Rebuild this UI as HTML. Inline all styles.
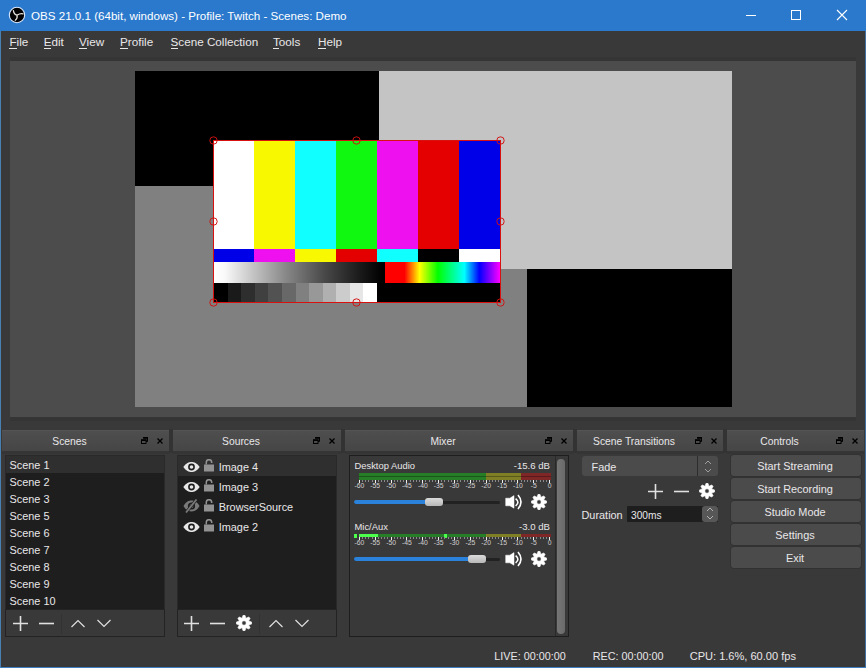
<!DOCTYPE html>
<html><head><meta charset="utf-8">
<style>
*{margin:0;padding:0;box-sizing:border-box}
html,body{width:866px;height:668px;overflow:hidden;background:#3a393a;font-family:"Liberation Sans",sans-serif;color:#e8e7e8}
.a{position:absolute}
.t{position:absolute;white-space:nowrap;line-height:1}
#titlebar{left:0;top:0;width:866px;height:31px;background:#2b79cc}
#bl{left:0;top:31px;width:1px;height:637px;background:#4a7fb4}
#br{left:865px;top:31px;width:1px;height:637px;background:#41719f}
#bb{left:0;top:667px;width:866px;height:1px;background:#3f7fc0}
.menu{font-size:11.7px;color:#e8e7e8;top:36px}
.menu u{text-decoration:none;border-bottom:1px solid #e8e7e8}
.dt{position:absolute;top:430px;height:21px;background:#464546}
.dt .t{font-size:10.3px;top:5px}
.fl{position:absolute;top:7px}
.cl{position:absolute;top:7px}
.lb{position:absolute;background:#1f1e1f}
.row{position:absolute;left:0;right:0}
.tb{position:absolute;background:#3a393a;border:1px solid #2a292a}
.btn{position:absolute;left:731px;width:130px;height:21px;background:#585758;border-radius:3px}
.btn .t{font-size:10.9px;left:0;right:0;text-align:center;top:5px}
.st{font-size:10.8px;top:651px}
</style></head><body>
<div id="titlebar" class="a"></div>
<svg class="a" style="left:8px;top:6px" width="18" height="18" viewBox="0 0 18 18">
<circle cx="9" cy="9" r="7.7" fill="#000" stroke="#d8e8ff" stroke-width="1.1"/>
<path d="M9 9.2Q6 8.6 5.4 4.6M9 9.2Q12 7.2 15 7.8M9 9.2Q9.8 12.4 7.3 14.2" fill="none" stroke="#e6e2dc" stroke-width="1.3" stroke-linecap="round"/>
</svg>
<div class="t" style="left:31px;top:10px;font-size:11.6px;color:#fff">OBS 21.0.1 (64bit, windows) - Profile: Twitch - Scenes: Demo</div>
<div class="a" style="left:746px;top:15px;width:10px;height:1px;background:#fff"></div>
<div class="a" style="left:791px;top:10px;width:10px;height:10px;border:1px solid #fff"></div>
<svg class="a" style="left:836px;top:9px" width="12" height="12" viewBox="0 0 12 12"><path d="M1 1L11 11M11 1L1 11" stroke="#fff" stroke-width="1.1"/></svg>

<div class="t menu" style="left:9.4px"><u>F</u>ile</div>
<div class="t menu" style="left:43.7px"><u>E</u>dit</div>
<div class="t menu" style="left:79px"><u>V</u>iew</div>
<div class="t menu" style="left:120px"><u>P</u>rofile</div>
<div class="t menu" style="left:170.5px"><u>S</u>cene Collection</div>
<div class="t menu" style="left:273px"><u>T</u>ools</div>
<div class="t menu" style="left:318px"><u>H</u>elp</div>

<!-- preview -->
<div class="a" style="left:10px;top:57px;width:846px;height:364px;background:#363536"></div>
<div class="a" style="left:10px;top:61px;width:846px;height:356px;background:#4c4c4c"></div>
<div class="a" style="left:135px;top:71px;width:597px;height:336px;background:#808080"></div>
<div class="a" style="left:135px;top:71px;width:244px;height:115px;background:#000"></div>
<div class="a" style="left:379px;top:71px;width:353px;height:198px;background:#c4c4c4"></div>
<div class="a" style="left:527px;top:269px;width:205px;height:138px;background:#000"></div>
<div class="a" style="left:214px;top:141px;width:40px;height:108px;background:#ffffff"></div>
<div class="a" style="left:214px;top:249px;width:40px;height:13px;background:#0000e8"></div>
<div class="a" style="left:254px;top:141px;width:41px;height:108px;background:#f8f800"></div>
<div class="a" style="left:254px;top:249px;width:41px;height:13px;background:#ee10ee"></div>
<div class="a" style="left:295px;top:141px;width:41px;height:108px;background:#10ffff"></div>
<div class="a" style="left:295px;top:249px;width:41px;height:13px;background:#f8f800"></div>
<div class="a" style="left:336px;top:141px;width:41px;height:108px;background:#10f810"></div>
<div class="a" style="left:336px;top:249px;width:41px;height:13px;background:#e40000"></div>
<div class="a" style="left:377px;top:141px;width:41px;height:108px;background:#ee10ee"></div>
<div class="a" style="left:377px;top:249px;width:41px;height:13px;background:#10ffff"></div>
<div class="a" style="left:418px;top:141px;width:41px;height:108px;background:#e40000"></div>
<div class="a" style="left:418px;top:249px;width:41px;height:13px;background:#000000"></div>
<div class="a" style="left:459px;top:141px;width:41px;height:108px;background:#0000e8"></div>
<div class="a" style="left:459px;top:249px;width:41px;height:13px;background:#ffffff"></div>
<div class="a" style="left:214px;top:262px;width:286px;height:21px;background:#000"></div>
<div class="a" style="left:214px;top:262px;width:168px;height:21px;background:linear-gradient(90deg,#fff 0%,#fafafa 6%,#8a8a8a 42%,#484848 66%,#1c1c1c 86%,#000 100%)"></div>
<div class="a" style="left:385px;top:262px;width:115px;height:21px;background:linear-gradient(90deg,#f00 0%,#f00 17%,#ff0 30%,#0f0 46%,#0ff 69%,#00f 82%,#f0f 100%)"></div>
<div class="a" style="left:214px;top:283px;width:286px;height:19px;background:#000"></div>
<div class="a" style="left:214.00px;top:283px;width:13.88px;height:19px;background:rgb(0,0,0)"></div>
<div class="a" style="left:227.58px;top:283px;width:13.88px;height:19px;background:rgb(26,26,26)"></div>
<div class="a" style="left:241.17px;top:283px;width:13.88px;height:19px;background:rgb(46,46,46)"></div>
<div class="a" style="left:254.75px;top:283px;width:13.88px;height:19px;background:rgb(64,64,64)"></div>
<div class="a" style="left:268.33px;top:283px;width:13.88px;height:19px;background:rgb(82,82,82)"></div>
<div class="a" style="left:281.92px;top:283px;width:13.88px;height:19px;background:rgb(104,104,104)"></div>
<div class="a" style="left:295.50px;top:283px;width:13.88px;height:19px;background:rgb(128,128,128)"></div>
<div class="a" style="left:309.08px;top:283px;width:13.88px;height:19px;background:rgb(152,152,152)"></div>
<div class="a" style="left:322.67px;top:283px;width:13.88px;height:19px;background:rgb(176,176,176)"></div>
<div class="a" style="left:336.25px;top:283px;width:13.88px;height:19px;background:rgb(204,204,204)"></div>
<div class="a" style="left:349.83px;top:283px;width:13.88px;height:19px;background:rgb(230,230,230)"></div>
<div class="a" style="left:363.42px;top:283px;width:13.88px;height:19px;background:rgb(255,255,255)"></div>
<div class="a" style="left:213px;top:140px;width:288px;height:163px;border:1px solid #d81010"></div>
<svg class="a" style="left:0;top:0" width="866" height="668"><circle cx="213.5" cy="140.5" r="3.7" fill="none" stroke="#d41010" stroke-width="0.95"/><circle cx="213.5" cy="221.5" r="3.7" fill="none" stroke="#d41010" stroke-width="0.95"/><circle cx="213.5" cy="302.5" r="3.7" fill="none" stroke="#d41010" stroke-width="0.95"/><circle cx="356.5" cy="140.5" r="3.7" fill="none" stroke="#d41010" stroke-width="0.95"/><circle cx="356.5" cy="302.5" r="3.7" fill="none" stroke="#d41010" stroke-width="0.95"/><circle cx="500.5" cy="140.5" r="3.7" fill="none" stroke="#d41010" stroke-width="0.95"/><circle cx="500.5" cy="221.5" r="3.7" fill="none" stroke="#d41010" stroke-width="0.95"/><circle cx="500.5" cy="302.5" r="3.7" fill="none" stroke="#d41010" stroke-width="0.95"/></svg>

<!-- docks -->
<!--DOCKS-->
<div class="a" style="left:169px;top:429px;width:4px;height:24px;background:#343334"></div>
<div class="a" style="left:341px;top:429px;width:4px;height:24px;background:#343334"></div>
<div class="a" style="left:573px;top:429px;width:4px;height:24px;background:#343334"></div>
<div class="a" style="left:723px;top:429px;width:4px;height:24px;background:#343334"></div>
<div class="a" style="left:2px;top:430px;width:167px;height:21px;background:linear-gradient(#4f4e4f,#474647);border-top:1px solid #555455"></div>
<div class="a" style="left:2px;top:451px;width:167px;height:3px;background:#363536"></div>
<div class="t" style="left:-130.50px;width:400px;text-align:center;top:437.28px;font-size:10.3px;color:#e8e7e8;">Scenes</div>
<svg class="a" style="left:141px;top:437px" width="7" height="7" viewBox="0 0 7 7"><path d="M2.5 1H6.5V4.5H5" fill="none" stroke="#000" stroke-width="1"/><path d="M2 0.8H7" stroke="#000" stroke-width="1.6"/><rect x="0.5" y="3" width="4.5" height="3.5" fill="none" stroke="#000" stroke-width="1"/><path d="M0 3.2H5.5" stroke="#000" stroke-width="1.6"/></svg>
<svg class="a" style="left:157px;top:437.5px" width="6" height="6" viewBox="0 0 6 6"><path d="M0.5 0.5L5.5 5.5M5.5 0.5L0.5 5.5" stroke="#000" stroke-width="1.3"/></svg>
<div class="a" style="left:173px;top:430px;width:168px;height:21px;background:linear-gradient(#4f4e4f,#474647);border-top:1px solid #555455"></div>
<div class="a" style="left:173px;top:451px;width:168px;height:3px;background:#363536"></div>
<div class="t" style="left:41.00px;width:400px;text-align:center;top:437.28px;font-size:10.3px;color:#e8e7e8;">Sources</div>
<svg class="a" style="left:313px;top:437px" width="7" height="7" viewBox="0 0 7 7"><path d="M2.5 1H6.5V4.5H5" fill="none" stroke="#000" stroke-width="1"/><path d="M2 0.8H7" stroke="#000" stroke-width="1.6"/><rect x="0.5" y="3" width="4.5" height="3.5" fill="none" stroke="#000" stroke-width="1"/><path d="M0 3.2H5.5" stroke="#000" stroke-width="1.6"/></svg>
<svg class="a" style="left:329px;top:437.5px" width="6" height="6" viewBox="0 0 6 6"><path d="M0.5 0.5L5.5 5.5M5.5 0.5L0.5 5.5" stroke="#000" stroke-width="1.3"/></svg>
<div class="a" style="left:345px;top:430px;width:228px;height:21px;background:linear-gradient(#4f4e4f,#474647);border-top:1px solid #555455"></div>
<div class="a" style="left:345px;top:451px;width:228px;height:3px;background:#363536"></div>
<div class="t" style="left:243.00px;width:400px;text-align:center;top:437.28px;font-size:10.3px;color:#e8e7e8;">Mixer</div>
<svg class="a" style="left:545px;top:437px" width="7" height="7" viewBox="0 0 7 7"><path d="M2.5 1H6.5V4.5H5" fill="none" stroke="#000" stroke-width="1"/><path d="M2 0.8H7" stroke="#000" stroke-width="1.6"/><rect x="0.5" y="3" width="4.5" height="3.5" fill="none" stroke="#000" stroke-width="1"/><path d="M0 3.2H5.5" stroke="#000" stroke-width="1.6"/></svg>
<svg class="a" style="left:561px;top:437.5px" width="6" height="6" viewBox="0 0 6 6"><path d="M0.5 0.5L5.5 5.5M5.5 0.5L0.5 5.5" stroke="#000" stroke-width="1.3"/></svg>
<div class="a" style="left:577px;top:430px;width:146px;height:21px;background:linear-gradient(#4f4e4f,#474647);border-top:1px solid #555455"></div>
<div class="a" style="left:577px;top:451px;width:146px;height:3px;background:#363536"></div>
<div class="t" style="left:434.00px;width:400px;text-align:center;top:437.28px;font-size:10.3px;color:#e8e7e8;">Scene Transitions</div>
<svg class="a" style="left:695px;top:437px" width="7" height="7" viewBox="0 0 7 7"><path d="M2.5 1H6.5V4.5H5" fill="none" stroke="#000" stroke-width="1"/><path d="M2 0.8H7" stroke="#000" stroke-width="1.6"/><rect x="0.5" y="3" width="4.5" height="3.5" fill="none" stroke="#000" stroke-width="1"/><path d="M0 3.2H5.5" stroke="#000" stroke-width="1.6"/></svg>
<svg class="a" style="left:711px;top:437.5px" width="6" height="6" viewBox="0 0 6 6"><path d="M0.5 0.5L5.5 5.5M5.5 0.5L0.5 5.5" stroke="#000" stroke-width="1.3"/></svg>
<div class="a" style="left:727px;top:430px;width:137px;height:21px;background:linear-gradient(#4f4e4f,#474647);border-top:1px solid #555455"></div>
<div class="a" style="left:727px;top:451px;width:137px;height:3px;background:#363536"></div>
<div class="t" style="left:579.50px;width:400px;text-align:center;top:437.28px;font-size:10.3px;color:#e8e7e8;">Controls</div>
<svg class="a" style="left:836px;top:437px" width="7" height="7" viewBox="0 0 7 7"><path d="M2.5 1H6.5V4.5H5" fill="none" stroke="#000" stroke-width="1"/><path d="M2 0.8H7" stroke="#000" stroke-width="1.6"/><rect x="0.5" y="3" width="4.5" height="3.5" fill="none" stroke="#000" stroke-width="1"/><path d="M0 3.2H5.5" stroke="#000" stroke-width="1.6"/></svg>
<svg class="a" style="left:852px;top:437.5px" width="6" height="6" viewBox="0 0 6 6"><path d="M0.5 0.5L5.5 5.5M5.5 0.5L0.5 5.5" stroke="#000" stroke-width="1.3"/></svg>
<div class="a" style="left:5px;top:455px;width:160px;height:155px;background:#1f1e1f;border:1px solid #2a292a"></div>
<div class="a" style="left:6px;top:456px;width:158px;height:17px;background:#302f30"></div>
<div class="t" style="left:9.50px;top:459.77px;font-size:10.9px;color:#e8e7e8;">Scene 1</div>
<div class="t" style="left:9.50px;top:476.77px;font-size:10.9px;color:#e8e7e8;">Scene 2</div>
<div class="t" style="left:9.50px;top:493.77px;font-size:10.9px;color:#e8e7e8;">Scene 3</div>
<div class="t" style="left:9.50px;top:510.77px;font-size:10.9px;color:#e8e7e8;">Scene 5</div>
<div class="t" style="left:9.50px;top:527.77px;font-size:10.9px;color:#e8e7e8;">Scene 6</div>
<div class="t" style="left:9.50px;top:544.77px;font-size:10.9px;color:#e8e7e8;">Scene 7</div>
<div class="t" style="left:9.50px;top:561.77px;font-size:10.9px;color:#e8e7e8;">Scene 8</div>
<div class="t" style="left:9.50px;top:578.77px;font-size:10.9px;color:#e8e7e8;">Scene 9</div>
<div class="t" style="left:9.50px;top:595.77px;font-size:10.9px;color:#e8e7e8;">Scene 10</div>
<div class="a" style="left:5px;top:609px;width:160px;height:28px;background:#3a393a;border:1px solid #242324"></div>
<svg class="a" style="left:12.5px;top:615.5px" width="15" height="15" viewBox="0 0 15 15"><path d="M7.5 0V15M0 7.5H15" stroke="#e1e0e1" stroke-width="1.6"/></svg>
<svg class="a" style="left:38.5px;top:615.5px" width="15" height="15" viewBox="0 0 15 15"><path d="M0 7.5H15" stroke="#e1e0e1" stroke-width="1.6"/></svg>
<div class="a" style="left:61px;top:614px;width:1px;height:20px;background:#333233"></div>
<svg class="a" style="left:71.0px;top:618.5px" width="14" height="9" viewBox="0 0 14 9"><path d="M0.5 8L7 1.5L13.5 8" fill="none" stroke="#e1e0e1" stroke-width="1.2"/></svg>
<svg class="a" style="left:97.0px;top:618.5px" width="14" height="9" viewBox="0 0 14 9"><path d="M0.5 1L7 7.5L13.5 1" fill="none" stroke="#e1e0e1" stroke-width="1.2"/></svg>
<div class="a" style="left:177px;top:455px;width:160px;height:155px;background:#1f1e1f;border:1px solid #2a292a"></div>
<div class="a" style="left:178px;top:456px;width:158px;height:20px;background:#302f30"></div>
<svg class="a" style="left:182.5px;top:461px" width="17" height="12" viewBox="0 0 17 12"><path d="M0.3 6C3 2 6 1 8.5 1S14 2 16.7 6C14 10 11 11 8.5 11S3 10 0.3 6Z" fill="#e8e7e8"/><circle cx="8.5" cy="6" r="3.4" fill="#1f1e1f"/><circle cx="8.5" cy="6" r="1.8" fill="#e8e7e8"/></svg>
<svg class="a" style="left:204px;top:458.8px" width="11" height="14" viewBox="0 0 11 14"><path d="M2.3 5.5V3.4A2.7 2.7 0 0 1 7.7 3.4V4" fill="none" stroke="#939293" stroke-width="1.5"/><rect x="0" y="5.5" width="10" height="7" fill="#939293"/></svg>
<div class="t" style="left:218.70px;top:461.77px;font-size:10.9px;color:#e8e7e8;">Image 4</div>
<svg class="a" style="left:182.5px;top:481px" width="17" height="12" viewBox="0 0 17 12"><path d="M0.3 6C3 2 6 1 8.5 1S14 2 16.7 6C14 10 11 11 8.5 11S3 10 0.3 6Z" fill="#e8e7e8"/><circle cx="8.5" cy="6" r="3.4" fill="#1f1e1f"/><circle cx="8.5" cy="6" r="1.8" fill="#e8e7e8"/></svg>
<svg class="a" style="left:204px;top:478.8px" width="11" height="14" viewBox="0 0 11 14"><path d="M2.3 5.5V3.4A2.7 2.7 0 0 1 7.7 3.4V4" fill="none" stroke="#939293" stroke-width="1.5"/><rect x="0" y="5.5" width="10" height="7" fill="#939293"/></svg>
<div class="t" style="left:218.70px;top:481.77px;font-size:10.9px;color:#e8e7e8;">Image 3</div>
<svg class="a" style="left:183px;top:499px" width="17" height="14" viewBox="0 0 17 14"><path d="M0.5 7C3 2.5 6 1.5 8.5 1.5S14 2.5 16.5 7C14 11.5 11 12.5 8.5 12.5S3 11.5 0.5 7Z" fill="#7a797a"/><circle cx="8.5" cy="7" r="3.6" fill="#1f1e1f"/><circle cx="8.5" cy="7" r="1.9" fill="#7a797a"/><path d="M13.5 0.5L3 13.5" stroke="#1f1e1f" stroke-width="3"/><path d="M13.5 0.5L3 13.5" stroke="#7a797a" stroke-width="1.8"/></svg>
<svg class="a" style="left:204px;top:498.8px" width="11" height="14" viewBox="0 0 11 14"><path d="M2.3 5.5V3.4A2.7 2.7 0 0 1 7.7 3.4V4" fill="none" stroke="#939293" stroke-width="1.5"/><rect x="0" y="5.5" width="10" height="7" fill="#939293"/></svg>
<div class="t" style="left:218.70px;top:501.77px;font-size:10.9px;color:#e8e7e8;">BrowserSource</div>
<svg class="a" style="left:182.5px;top:521px" width="17" height="12" viewBox="0 0 17 12"><path d="M0.3 6C3 2 6 1 8.5 1S14 2 16.7 6C14 10 11 11 8.5 11S3 10 0.3 6Z" fill="#e8e7e8"/><circle cx="8.5" cy="6" r="3.4" fill="#1f1e1f"/><circle cx="8.5" cy="6" r="1.8" fill="#e8e7e8"/></svg>
<svg class="a" style="left:204px;top:518.8px" width="11" height="14" viewBox="0 0 11 14"><path d="M2.3 5.5V3.4A2.7 2.7 0 0 1 7.7 3.4V4" fill="none" stroke="#939293" stroke-width="1.5"/><rect x="0" y="5.5" width="10" height="7" fill="#939293"/></svg>
<div class="t" style="left:218.70px;top:521.77px;font-size:10.9px;color:#e8e7e8;">Image 2</div>
<div class="a" style="left:177px;top:609px;width:160px;height:28px;background:#3a393a;border:1px solid #242324"></div>
<svg class="a" style="left:184.1px;top:615.5px" width="15" height="15" viewBox="0 0 15 15"><path d="M7.5 0V15M0 7.5H15" stroke="#e1e0e1" stroke-width="1.6"/></svg>
<svg class="a" style="left:210.2px;top:615.5px" width="15" height="15" viewBox="0 0 15 15"><path d="M0 7.5H15" stroke="#e1e0e1" stroke-width="1.6"/></svg>
<svg class="a" style="left:235.8px;top:614.7px" width="16" height="16" viewBox="0 0 16 16"><path d="M6.07 3.34 L7.00 0.36 L9.00 0.36 L9.93 3.34 L12.69 1.90 L14.10 3.31 L12.66 6.07 L15.64 7.00 L15.64 9.00 L12.66 9.93 L14.10 12.69 L12.69 14.10 L9.93 12.66 L9.00 15.64 L7.00 15.64 L6.07 12.66 L3.31 14.10 L1.90 12.69 L3.34 9.93 L0.36 9.00 L0.36 7.00 L3.34 6.07 L1.90 3.31 L3.31 1.90Z M10.20 8.00 A2.20 2.20 0 1 0 5.80 8.00 A2.20 2.20 0 1 0 10.20 8.00Z" fill="#fff" fill-rule="evenodd" stroke="#fff" stroke-width="0.6" stroke-linejoin="round"/></svg>
<div class="a" style="left:259px;top:614px;width:1px;height:20px;background:#333233"></div>
<svg class="a" style="left:269.0px;top:618.5px" width="14" height="9" viewBox="0 0 14 9"><path d="M0.5 8L7 1.5L13.5 8" fill="none" stroke="#e1e0e1" stroke-width="1.2"/></svg>
<svg class="a" style="left:295.0px;top:618.5px" width="14" height="9" viewBox="0 0 14 9"><path d="M0.5 1L7 7.5L13.5 1" fill="none" stroke="#e1e0e1" stroke-width="1.2"/></svg>
<div class="a" style="left:349px;top:455px;width:220px;height:182px;background:#3a393a;border:1px solid #1f1e1f"></div>
<div class="a" style="left:555px;top:456px;width:13px;height:180px;background:#3a393a;border-left:1px solid #2a292a"></div>
<div class="a" style="left:556.8px;top:459px;width:8.6px;height:175px;background:linear-gradient(90deg,#777677,#6b6a6b);border-radius:4px"></div>
<div class="t" style="left:354.50px;top:461.04px;font-size:9.4px;color:#e8e7e8;">Desktop Audio</div>
<div class="t" style="left:400px;width:150px;text-align:right;top:460.87px;font-size:9.6px">-15.6 dB</div>
<div class="a" style="left:359px;top:472.5px;width:192px;height:3.5px;background:linear-gradient(90deg,#267f26 0,#267f26 127.2px,#7f7f26 127.2px,#7f7f26 162.1px,#7f2626 162.1px)"></div>
<div class="a" style="left:359px;top:476px;width:192px;height:3.5px;background:linear-gradient(90deg,#267f26 0,#267f26 127.2px,#7f7f26 127.2px,#7f7f26 162.1px,#7f2626 162.1px)"></div>
<div class="a" style="left:359px;top:476px;width:192px;height:1px;background:rgba(0,0,0,0.3)"></div>
<svg class="a" style="left:350px;top:480px" width="210" height="4"><path d="M9.5 0V3" stroke="#efeff0" stroke-width="1"/><path d="M12.5 0V2" stroke="#8a8a8c" stroke-width="1"/><path d="M15.5 0V2" stroke="#8a8a8c" stroke-width="1"/><path d="M18.5 0V2" stroke="#8a8a8c" stroke-width="1"/><path d="M22.5 0V2" stroke="#8a8a8c" stroke-width="1"/><path d="M25.5 0V3" stroke="#efeff0" stroke-width="1"/><path d="M28.5 0V2" stroke="#8a8a8c" stroke-width="1"/><path d="M31.5 0V2" stroke="#8a8a8c" stroke-width="1"/><path d="M34.5 0V2" stroke="#8a8a8c" stroke-width="1"/><path d="M37.5 0V2" stroke="#8a8a8c" stroke-width="1"/><path d="M41.5 0V3" stroke="#efeff0" stroke-width="1"/><path d="M44.5 0V2" stroke="#8a8a8c" stroke-width="1"/><path d="M47.5 0V2" stroke="#8a8a8c" stroke-width="1"/><path d="M50.5 0V2" stroke="#8a8a8c" stroke-width="1"/><path d="M53.5 0V2" stroke="#8a8a8c" stroke-width="1"/><path d="M56.5 0V3" stroke="#efeff0" stroke-width="1"/><path d="M60.5 0V2" stroke="#8a8a8c" stroke-width="1"/><path d="M63.5 0V2" stroke="#8a8a8c" stroke-width="1"/><path d="M66.5 0V2" stroke="#8a8a8c" stroke-width="1"/><path d="M69.5 0V2" stroke="#8a8a8c" stroke-width="1"/><path d="M72.5 0V3" stroke="#efeff0" stroke-width="1"/><path d="M75.5 0V2" stroke="#8a8a8c" stroke-width="1"/><path d="M79.5 0V2" stroke="#8a8a8c" stroke-width="1"/><path d="M82.5 0V2" stroke="#8a8a8c" stroke-width="1"/><path d="M85.5 0V2" stroke="#8a8a8c" stroke-width="1"/><path d="M88.5 0V3" stroke="#efeff0" stroke-width="1"/><path d="M91.5 0V2" stroke="#8a8a8c" stroke-width="1"/><path d="M94.5 0V2" stroke="#8a8a8c" stroke-width="1"/><path d="M98.5 0V2" stroke="#8a8a8c" stroke-width="1"/><path d="M101.5 0V2" stroke="#8a8a8c" stroke-width="1"/><path d="M104.5 0V3" stroke="#efeff0" stroke-width="1"/><path d="M107.5 0V2" stroke="#8a8a8c" stroke-width="1"/><path d="M110.5 0V2" stroke="#8a8a8c" stroke-width="1"/><path d="M114.5 0V2" stroke="#8a8a8c" stroke-width="1"/><path d="M117.5 0V2" stroke="#8a8a8c" stroke-width="1"/><path d="M120.5 0V3" stroke="#efeff0" stroke-width="1"/><path d="M123.5 0V2" stroke="#8a8a8c" stroke-width="1"/><path d="M126.5 0V2" stroke="#8a8a8c" stroke-width="1"/><path d="M129.5 0V2" stroke="#8a8a8c" stroke-width="1"/><path d="M133.5 0V2" stroke="#8a8a8c" stroke-width="1"/><path d="M136.5 0V3" stroke="#efeff0" stroke-width="1"/><path d="M139.5 0V2" stroke="#8a8a8c" stroke-width="1"/><path d="M142.5 0V2" stroke="#8a8a8c" stroke-width="1"/><path d="M145.5 0V2" stroke="#8a8a8c" stroke-width="1"/><path d="M148.5 0V2" stroke="#8a8a8c" stroke-width="1"/><path d="M152.5 0V3" stroke="#efeff0" stroke-width="1"/><path d="M155.5 0V2" stroke="#8a8a8c" stroke-width="1"/><path d="M158.5 0V2" stroke="#8a8a8c" stroke-width="1"/><path d="M161.5 0V2" stroke="#8a8a8c" stroke-width="1"/><path d="M164.5 0V2" stroke="#8a8a8c" stroke-width="1"/><path d="M167.5 0V3" stroke="#efeff0" stroke-width="1"/><path d="M171.5 0V2" stroke="#8a8a8c" stroke-width="1"/><path d="M174.5 0V2" stroke="#8a8a8c" stroke-width="1"/><path d="M177.5 0V2" stroke="#8a8a8c" stroke-width="1"/><path d="M180.5 0V2" stroke="#8a8a8c" stroke-width="1"/><path d="M183.5 0V3" stroke="#efeff0" stroke-width="1"/><path d="M186.5 0V2" stroke="#8a8a8c" stroke-width="1"/><path d="M190.5 0V2" stroke="#8a8a8c" stroke-width="1"/><path d="M193.5 0V2" stroke="#8a8a8c" stroke-width="1"/><path d="M196.5 0V2" stroke="#8a8a8c" stroke-width="1"/><path d="M199.5 0V3" stroke="#efeff0" stroke-width="1"/></svg>
<div class="t" style="left:159.40px;width:400px;text-align:center;top:483.24px;font-size:6.8px;color:#d0d0d0;">-60</div>
<div class="t" style="left:175.25px;width:400px;text-align:center;top:483.24px;font-size:6.8px;color:#d0d0d0;">-55</div>
<div class="t" style="left:191.10px;width:400px;text-align:center;top:483.24px;font-size:6.8px;color:#d0d0d0;">-50</div>
<div class="t" style="left:206.95px;width:400px;text-align:center;top:483.24px;font-size:6.8px;color:#d0d0d0;">-45</div>
<div class="t" style="left:222.80px;width:400px;text-align:center;top:483.24px;font-size:6.8px;color:#d0d0d0;">-40</div>
<div class="t" style="left:238.65px;width:400px;text-align:center;top:483.24px;font-size:6.8px;color:#d0d0d0;">-35</div>
<div class="t" style="left:254.50px;width:400px;text-align:center;top:483.24px;font-size:6.8px;color:#d0d0d0;">-30</div>
<div class="t" style="left:270.35px;width:400px;text-align:center;top:483.24px;font-size:6.8px;color:#d0d0d0;">-25</div>
<div class="t" style="left:286.20px;width:400px;text-align:center;top:483.24px;font-size:6.8px;color:#d0d0d0;">-20</div>
<div class="t" style="left:302.05px;width:400px;text-align:center;top:483.24px;font-size:6.8px;color:#d0d0d0;">-15</div>
<div class="t" style="left:317.90px;width:400px;text-align:center;top:483.24px;font-size:6.8px;color:#d0d0d0;">-10</div>
<div class="t" style="left:333.75px;width:400px;text-align:center;top:483.24px;font-size:6.8px;color:#d0d0d0;">-5</div>
<div class="t" style="left:349.60px;width:400px;text-align:center;top:483.24px;font-size:6.8px;color:#d0d0d0;">0</div>
<div class="a" style="left:354px;top:500.5px;width:146px;height:3px;background:#232223;border-radius:1.5px"></div>
<div class="a" style="left:354px;top:499.7px;width:75px;height:4.6px;background:#2a82da;border-radius:2.3px"></div>
<div class="a" style="left:425px;top:498px;width:18px;height:8px;background:linear-gradient(#dcdbdc,#b9b8b9);border-radius:3px"></div>
<svg class="a" style="left:505px;top:494px" width="18" height="16" viewBox="0 0 18 16"><path d="M0.7 4.2H4.8L9 1.6V14.2L4.8 11.8H0.7Z" fill="#fff" stroke="#fff" stroke-width="0.5" stroke-linejoin="round"/><path d="M10.6 4.6Q15.2 8.3 10.6 12" fill="none" stroke="#fff" stroke-width="1.6"/><path d="M13 1Q19 8 13 15" fill="none" stroke="#fff" stroke-width="1.6"/></svg>
<svg class="a" style="left:531.0px;top:494.0px" width="16" height="16" viewBox="0 0 16 16"><path d="M6.07 3.34 L7.00 0.36 L9.00 0.36 L9.93 3.34 L12.69 1.90 L14.10 3.31 L12.66 6.07 L15.64 7.00 L15.64 9.00 L12.66 9.93 L14.10 12.69 L12.69 14.10 L9.93 12.66 L9.00 15.64 L7.00 15.64 L6.07 12.66 L3.31 14.10 L1.90 12.69 L3.34 9.93 L0.36 9.00 L0.36 7.00 L3.34 6.07 L1.90 3.31 L3.31 1.90Z M10.20 8.00 A2.20 2.20 0 1 0 5.80 8.00 A2.20 2.20 0 1 0 10.20 8.00Z" fill="#fff" fill-rule="evenodd" stroke="#fff" stroke-width="0.6" stroke-linejoin="round"/></svg>
<div class="t" style="left:354.50px;top:522.04px;font-size:9.4px;color:#e8e7e8;">Mic/Aux</div>
<div class="t" style="left:400px;width:150px;text-align:right;top:521.87px;font-size:9.6px">-3.0 dB</div>
<div class="a" style="left:359px;top:534px;width:192px;height:3px;background:linear-gradient(90deg,#267f26 0,#267f26 127.2px,#7f7f26 127.2px,#7f7f26 162.1px,#7f2626 162.1px)"></div>
<div class="a" style="left:359px;top:534px;width:19.4px;height:3px;background:#4cff4c"></div>
<div class="a" style="left:443.5px;top:533.5px;width:3px;height:4px;background:#4cff4c"></div>
<svg class="a" style="left:350px;top:537px" width="210" height="4"><path d="M9.5 0V3" stroke="#efeff0" stroke-width="1"/><path d="M12.5 0V2" stroke="#8a8a8c" stroke-width="1"/><path d="M15.5 0V2" stroke="#8a8a8c" stroke-width="1"/><path d="M18.5 0V2" stroke="#8a8a8c" stroke-width="1"/><path d="M22.5 0V2" stroke="#8a8a8c" stroke-width="1"/><path d="M25.5 0V3" stroke="#efeff0" stroke-width="1"/><path d="M28.5 0V2" stroke="#8a8a8c" stroke-width="1"/><path d="M31.5 0V2" stroke="#8a8a8c" stroke-width="1"/><path d="M34.5 0V2" stroke="#8a8a8c" stroke-width="1"/><path d="M37.5 0V2" stroke="#8a8a8c" stroke-width="1"/><path d="M41.5 0V3" stroke="#efeff0" stroke-width="1"/><path d="M44.5 0V2" stroke="#8a8a8c" stroke-width="1"/><path d="M47.5 0V2" stroke="#8a8a8c" stroke-width="1"/><path d="M50.5 0V2" stroke="#8a8a8c" stroke-width="1"/><path d="M53.5 0V2" stroke="#8a8a8c" stroke-width="1"/><path d="M56.5 0V3" stroke="#efeff0" stroke-width="1"/><path d="M60.5 0V2" stroke="#8a8a8c" stroke-width="1"/><path d="M63.5 0V2" stroke="#8a8a8c" stroke-width="1"/><path d="M66.5 0V2" stroke="#8a8a8c" stroke-width="1"/><path d="M69.5 0V2" stroke="#8a8a8c" stroke-width="1"/><path d="M72.5 0V3" stroke="#efeff0" stroke-width="1"/><path d="M75.5 0V2" stroke="#8a8a8c" stroke-width="1"/><path d="M79.5 0V2" stroke="#8a8a8c" stroke-width="1"/><path d="M82.5 0V2" stroke="#8a8a8c" stroke-width="1"/><path d="M85.5 0V2" stroke="#8a8a8c" stroke-width="1"/><path d="M88.5 0V3" stroke="#efeff0" stroke-width="1"/><path d="M91.5 0V2" stroke="#8a8a8c" stroke-width="1"/><path d="M94.5 0V2" stroke="#8a8a8c" stroke-width="1"/><path d="M98.5 0V2" stroke="#8a8a8c" stroke-width="1"/><path d="M101.5 0V2" stroke="#8a8a8c" stroke-width="1"/><path d="M104.5 0V3" stroke="#efeff0" stroke-width="1"/><path d="M107.5 0V2" stroke="#8a8a8c" stroke-width="1"/><path d="M110.5 0V2" stroke="#8a8a8c" stroke-width="1"/><path d="M114.5 0V2" stroke="#8a8a8c" stroke-width="1"/><path d="M117.5 0V2" stroke="#8a8a8c" stroke-width="1"/><path d="M120.5 0V3" stroke="#efeff0" stroke-width="1"/><path d="M123.5 0V2" stroke="#8a8a8c" stroke-width="1"/><path d="M126.5 0V2" stroke="#8a8a8c" stroke-width="1"/><path d="M129.5 0V2" stroke="#8a8a8c" stroke-width="1"/><path d="M133.5 0V2" stroke="#8a8a8c" stroke-width="1"/><path d="M136.5 0V3" stroke="#efeff0" stroke-width="1"/><path d="M139.5 0V2" stroke="#8a8a8c" stroke-width="1"/><path d="M142.5 0V2" stroke="#8a8a8c" stroke-width="1"/><path d="M145.5 0V2" stroke="#8a8a8c" stroke-width="1"/><path d="M148.5 0V2" stroke="#8a8a8c" stroke-width="1"/><path d="M152.5 0V3" stroke="#efeff0" stroke-width="1"/><path d="M155.5 0V2" stroke="#8a8a8c" stroke-width="1"/><path d="M158.5 0V2" stroke="#8a8a8c" stroke-width="1"/><path d="M161.5 0V2" stroke="#8a8a8c" stroke-width="1"/><path d="M164.5 0V2" stroke="#8a8a8c" stroke-width="1"/><path d="M167.5 0V3" stroke="#efeff0" stroke-width="1"/><path d="M171.5 0V2" stroke="#8a8a8c" stroke-width="1"/><path d="M174.5 0V2" stroke="#8a8a8c" stroke-width="1"/><path d="M177.5 0V2" stroke="#8a8a8c" stroke-width="1"/><path d="M180.5 0V2" stroke="#8a8a8c" stroke-width="1"/><path d="M183.5 0V3" stroke="#efeff0" stroke-width="1"/><path d="M186.5 0V2" stroke="#8a8a8c" stroke-width="1"/><path d="M190.5 0V2" stroke="#8a8a8c" stroke-width="1"/><path d="M193.5 0V2" stroke="#8a8a8c" stroke-width="1"/><path d="M196.5 0V2" stroke="#8a8a8c" stroke-width="1"/><path d="M199.5 0V3" stroke="#efeff0" stroke-width="1"/></svg>
<div class="t" style="left:159.40px;width:400px;text-align:center;top:540.24px;font-size:6.8px;color:#d0d0d0;">-60</div>
<div class="t" style="left:175.25px;width:400px;text-align:center;top:540.24px;font-size:6.8px;color:#d0d0d0;">-55</div>
<div class="t" style="left:191.10px;width:400px;text-align:center;top:540.24px;font-size:6.8px;color:#d0d0d0;">-50</div>
<div class="t" style="left:206.95px;width:400px;text-align:center;top:540.24px;font-size:6.8px;color:#d0d0d0;">-45</div>
<div class="t" style="left:222.80px;width:400px;text-align:center;top:540.24px;font-size:6.8px;color:#d0d0d0;">-40</div>
<div class="t" style="left:238.65px;width:400px;text-align:center;top:540.24px;font-size:6.8px;color:#d0d0d0;">-35</div>
<div class="t" style="left:254.50px;width:400px;text-align:center;top:540.24px;font-size:6.8px;color:#d0d0d0;">-30</div>
<div class="t" style="left:270.35px;width:400px;text-align:center;top:540.24px;font-size:6.8px;color:#d0d0d0;">-25</div>
<div class="t" style="left:286.20px;width:400px;text-align:center;top:540.24px;font-size:6.8px;color:#d0d0d0;">-20</div>
<div class="t" style="left:302.05px;width:400px;text-align:center;top:540.24px;font-size:6.8px;color:#d0d0d0;">-15</div>
<div class="t" style="left:317.90px;width:400px;text-align:center;top:540.24px;font-size:6.8px;color:#d0d0d0;">-10</div>
<div class="t" style="left:333.75px;width:400px;text-align:center;top:540.24px;font-size:6.8px;color:#d0d0d0;">-5</div>
<div class="t" style="left:349.60px;width:400px;text-align:center;top:540.24px;font-size:6.8px;color:#d0d0d0;">0</div>
<div class="a" style="left:354px;top:533.5px;width:3px;height:4px;background:#4cff4c"></div>
<div class="a" style="left:354px;top:557.5px;width:146px;height:3px;background:#232223;border-radius:1.5px"></div>
<div class="a" style="left:354px;top:556.7px;width:118px;height:4.6px;background:#2a82da;border-radius:2.3px"></div>
<div class="a" style="left:468px;top:555px;width:18px;height:8px;background:linear-gradient(#dcdbdc,#b9b8b9);border-radius:3px"></div>
<svg class="a" style="left:505px;top:551px" width="18" height="16" viewBox="0 0 18 16"><path d="M0.7 4.2H4.8L9 1.6V14.2L4.8 11.8H0.7Z" fill="#fff" stroke="#fff" stroke-width="0.5" stroke-linejoin="round"/><path d="M10.6 4.6Q15.2 8.3 10.6 12" fill="none" stroke="#fff" stroke-width="1.6"/><path d="M13 1Q19 8 13 15" fill="none" stroke="#fff" stroke-width="1.6"/></svg>
<svg class="a" style="left:531.0px;top:551.0px" width="16" height="16" viewBox="0 0 16 16"><path d="M6.07 3.34 L7.00 0.36 L9.00 0.36 L9.93 3.34 L12.69 1.90 L14.10 3.31 L12.66 6.07 L15.64 7.00 L15.64 9.00 L12.66 9.93 L14.10 12.69 L12.69 14.10 L9.93 12.66 L9.00 15.64 L7.00 15.64 L6.07 12.66 L3.31 14.10 L1.90 12.69 L3.34 9.93 L0.36 9.00 L0.36 7.00 L3.34 6.07 L1.90 3.31 L3.31 1.90Z M10.20 8.00 A2.20 2.20 0 1 0 5.80 8.00 A2.20 2.20 0 1 0 10.20 8.00Z" fill="#fff" fill-rule="evenodd" stroke="#fff" stroke-width="0.6" stroke-linejoin="round"/></svg>
<div class="a" style="left:582px;top:456px;width:136px;height:20px;background:#4c4b4c;border-radius:3px"></div>
<div class="a" style="left:697px;top:456px;width:1px;height:20px;background:#2e2d2e"></div>
<svg class="a" style="left:704px;top:460px" width="8" height="14" viewBox="0 0 8 14"><path d="M1 4L4 1L7 4M1 9L4 12L7 9" fill="none" stroke="#a09fa0" stroke-width="1"/></svg>
<div class="t" style="left:591.50px;top:461.77px;font-size:10.9px;color:#e8e7e8;">Fade</div>
<svg class="a" style="left:647.5px;top:483.5px" width="15" height="15" viewBox="0 0 15 15"><path d="M7.5 0V15M0 7.5H15" stroke="#e1e0e1" stroke-width="1.6"/></svg>
<svg class="a" style="left:673.5px;top:483.5px" width="15" height="15" viewBox="0 0 15 15"><path d="M0 7.5H15" stroke="#e1e0e1" stroke-width="1.6"/></svg>
<svg class="a" style="left:698.8px;top:482.6px" width="16" height="16" viewBox="0 0 16 16"><path d="M6.07 3.34 L7.00 0.36 L9.00 0.36 L9.93 3.34 L12.69 1.90 L14.10 3.31 L12.66 6.07 L15.64 7.00 L15.64 9.00 L12.66 9.93 L14.10 12.69 L12.69 14.10 L9.93 12.66 L9.00 15.64 L7.00 15.64 L6.07 12.66 L3.31 14.10 L1.90 12.69 L3.34 9.93 L0.36 9.00 L0.36 7.00 L3.34 6.07 L1.90 3.31 L3.31 1.90Z M10.20 8.00 A2.20 2.20 0 1 0 5.80 8.00 A2.20 2.20 0 1 0 10.20 8.00Z" fill="#fff" fill-rule="evenodd" stroke="#fff" stroke-width="0.6" stroke-linejoin="round"/></svg>
<div class="t" style="left:581.50px;top:510.07px;font-size:10.9px;color:#e8e7e8;">Duration</div>
<div class="a" style="left:627px;top:506px;width:91px;height:16px;background:#1f1e1f"></div>
<div class="a" style="left:702px;top:506px;width:16px;height:16px;background:#585758;border-radius:3px"></div>
<svg class="a" style="left:706px;top:507px" width="8" height="14" viewBox="0 0 8 14"><path d="M1 4L4 1L7 4M1 9L4 12L7 9" fill="none" stroke="#b5b4b5" stroke-width="1"/></svg>
<div class="t" style="left:631.00px;top:510.67px;font-size:10.2px;color:#e8e7e8;">300ms</div>
<div class="a" style="left:731px;top:455px;width:130px;height:21px;background:#4c4b4c;border-radius:3px;box-shadow:0 0 0 1px #333233"></div>
<div class="t" style="left:595.00px;width:400px;text-align:center;top:461.27px;font-size:10.9px;color:#e8e7e8;">Start Streaming</div>
<div class="a" style="left:731px;top:478px;width:130px;height:21px;background:#4c4b4c;border-radius:3px;box-shadow:0 0 0 1px #333233"></div>
<div class="t" style="left:595.00px;width:400px;text-align:center;top:484.27px;font-size:10.9px;color:#e8e7e8;">Start Recording</div>
<div class="a" style="left:731px;top:501px;width:130px;height:21px;background:#4c4b4c;border-radius:3px;box-shadow:0 0 0 1px #333233"></div>
<div class="t" style="left:595.00px;width:400px;text-align:center;top:507.27px;font-size:10.9px;color:#e8e7e8;">Studio Mode</div>
<div class="a" style="left:731px;top:524px;width:130px;height:21px;background:#4c4b4c;border-radius:3px;box-shadow:0 0 0 1px #333233"></div>
<div class="t" style="left:595.00px;width:400px;text-align:center;top:530.27px;font-size:10.9px;color:#e8e7e8;">Settings</div>
<div class="a" style="left:731px;top:547px;width:130px;height:21px;background:#4c4b4c;border-radius:3px;box-shadow:0 0 0 1px #333233"></div>
<div class="t" style="left:595.00px;width:400px;text-align:center;top:553.27px;font-size:10.9px;color:#e8e7e8;">Exit</div>
<!--/DOCKS-->

<div class="t st" style="left:494.3px">LIVE: 00:00:00</div>
<div class="t st" style="left:592.7px">REC: 00:00:00</div>
<div class="t st" style="left:689.7px;font-size:11.05px">CPU: 1.6%, 60.00 fps</div>

<div id="bl" class="a"></div><div id="br" class="a"></div><div id="bb" class="a"></div>
</body></html>
